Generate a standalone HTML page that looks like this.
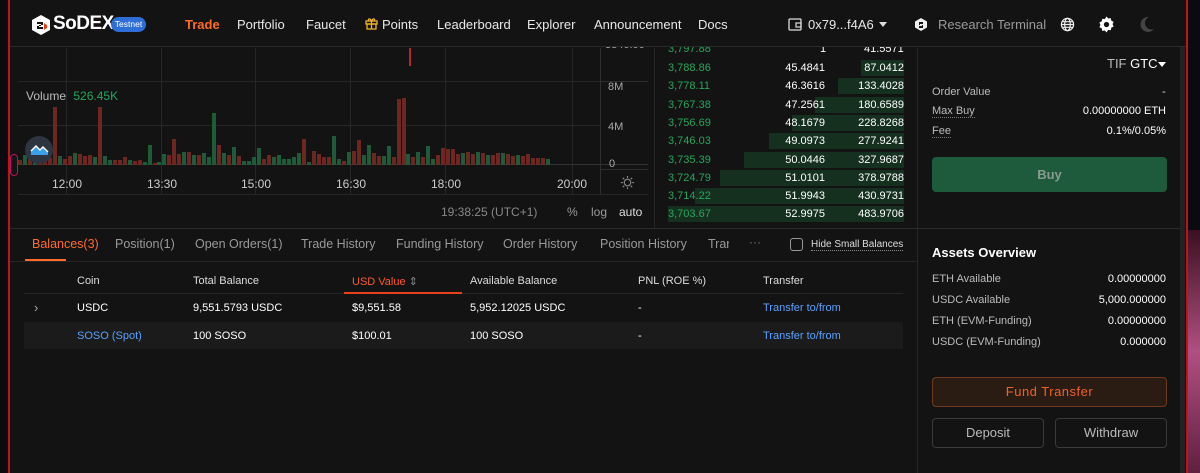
<!DOCTYPE html>
<html><head><meta charset="utf-8">
<style>
*{box-sizing:border-box;margin:0;padding:0}
body{width:1200px;height:473px;overflow:hidden;background:#0a0a10;font-family:"Liberation Sans",sans-serif;color:#ddd;position:relative}
.a{position:absolute;white-space:nowrap}
#win{position:absolute;left:8px;top:0;width:1178px;height:473px;background:#131313;border-left:2px solid #c0141c}
.nav{font-size:13px;color:#e8e8e8;top:17px}
.gl{position:absolute;background:#262626}
.ob{font-size:11px;height:18px;line-height:18px}
.sm{font-size:11px}
.btn{position:absolute;border-radius:4px;text-align:center}
#hdr{position:absolute;left:0;top:0;width:1186px;height:47px;z-index:5;background:linear-gradient(90deg,transparent 10px,#131313 10px)}
</style></head><body>
<div id="win"></div>
<div class="a" style="left:1186px;top:0;width:2px;height:473px;background:#c0141c"></div>
<div class="a" style="left:1188px;top:230px;width:12px;height:243px;background:linear-gradient(#3a1020,#b05080 50%,#602040)"></div>
<div class="a" style="left:1180px;top:18px;width:5px;height:455px;background:#222"></div>

<!-- header -->
<div id="hdr">
<svg class="a" style="left:31px;top:14px" width="20" height="22" viewBox="0 0 20 22"><path d="M10 1L19 6V16L10 21L1 16V6Z" fill="#fff"/><path d="M6 8h6v3H8v2h4v2H6v-3h4v-2H6z" fill="#131313"/><path d="M13 9l3 2v3l-3 2z" fill="#e8401a"/></svg>
<div class="a" style="left:53px;top:13px;font-size:19px;font-weight:bold;color:#fff;letter-spacing:-0.5px">SoDEX</div>
<div class="a" style="left:111px;top:17px;width:35px;height:15px;border-radius:8px;background:#2d6fd6;color:#fff;font-size:8.5px;line-height:15px;text-align:center">Testnet</div>
<div class="a nav" style="left:185px;color:#ff6a2b;font-weight:bold">Trade</div>
<div class="a nav" style="left:237px">Portfolio</div>
<div class="a nav" style="left:306px">Faucet</div>
<svg class="a" style="left:365px;top:17px" width="13" height="13" viewBox="0 0 13 13" fill="none" stroke="#f0b429" stroke-width="1.3"><rect x="1" y="4" width="11" height="3"/><rect x="2" y="7" width="9" height="5"/><path d="M6.5 4v8M6.5 4C5 1 3 1.5 3.5 3.5M6.5 4C8 1 10 1.5 9.5 3.5"/></svg>
<div class="a nav" style="left:382px">Points</div>
<div class="a nav" style="left:437px">Leaderboard</div>
<div class="a nav" style="left:527px">Explorer</div>
<div class="a nav" style="left:594px">Announcement</div>
<div class="a nav" style="left:698px">Docs</div>
<svg class="a" style="left:788px;top:18px" width="14" height="13" viewBox="0 0 14 13"><rect x="1" y="1" width="12" height="11" rx="1" fill="none" stroke="#ddd" stroke-width="1.3"/><rect x="8" y="5" width="5" height="4" fill="none" stroke="#ddd" stroke-width="1.2"/></svg>
<div class="a nav" style="left:808px">0x79...f4A6</div>
<div class="a" style="left:879px;top:22px;border:4px solid transparent;border-top:5px solid #ddd"></div>
<svg class="a" style="left:914px;top:17px" width="14" height="15" viewBox="0 0 14 15"><path d="M7 1L13 4.5V10.5L7 14L1 10.5V4.5Z" fill="#eee"/><path d="M5 5h4v2H6v1h3v3H5V9h3V8H5z" fill="#131313"/></svg>
<div class="a nav" style="left:938px;color:#9a9a9a">Research Terminal</div>
<svg class="a" style="left:1060px;top:17px" width="15" height="15" viewBox="0 0 16 16" fill="none" stroke="#eee" stroke-width="1.3"><circle cx="8" cy="8" r="6.5"/><ellipse cx="8" cy="8" rx="3" ry="6.5"/><path d="M1.5 8h13M2.5 5h11M2.5 11h11"/></svg>
<svg class="a" style="left:1098px;top:16px" width="17" height="17" viewBox="0 0 16 16"><path d="M8 0.5l1.6 1.8 2.4-.3.5 2.4 2.2 1.1-1 2.2 1 2.2-2.2 1.1-.5 2.4-2.4-.3L8 15.5l-1.6-1.8-2.4.3-.5-2.4L1.3 10.5l1-2.2-1-2.2 2.2-1.1.5-2.4 2.4.3z" fill="#fff"/><circle cx="8" cy="8" r="2.5" fill="#131313"/></svg>
<svg class="a" style="left:1139px;top:16px" width="16" height="17" viewBox="0 0 16 17"><path d="M10 1A7.5 7.5 0 1 0 15 13A6 6 0 0 1 10 1Z" fill="#444"/></svg>
<div class="a" style="left:10px;top:46px;width:1176px;height:1px;background:#2a2a2a"></div>
</div>

<!-- chart grid -->
<div class="gl" style="left:66px;top:48px;width:1px;height:146px"></div>
<div class="gl" style="left:161px;top:48px;width:1px;height:146px"></div>
<div class="gl" style="left:255px;top:48px;width:1px;height:146px"></div>
<div class="gl" style="left:350px;top:48px;width:1px;height:146px"></div>
<div class="gl" style="left:445px;top:48px;width:1px;height:146px"></div>
<div class="gl" style="left:572px;top:48px;width:1px;height:146px"></div>
<div class="gl" style="left:18px;top:81px;width:582px;height:1px"></div>
<div class="gl" style="left:18px;top:125px;width:582px;height:1px"></div>
<div class="gl" style="left:18px;top:164px;width:630px;height:1px;background:#333"></div>
<div class="gl" style="left:18px;top:194px;width:630px;height:1px"></div>
<div class="gl" style="left:600px;top:48px;width:1px;height:146px;background:#2e2e2e"></div>
<div class="gl" style="left:600px;top:81px;width:48px;height:1px;background:#2e2e2e"></div>
<div class="gl" style="left:600px;top:169px;width:48px;height:1px;background:#2e2e2e"></div>
<div class="gl" style="left:654px;top:48px;width:1px;height:180px;background:#262626"></div>
<div class="gl" style="left:917px;top:48px;width:1px;height:425px;background:#262626"></div>
<div class="a" style="left:409px;top:48px;width:2px;height:18px;background:#b02828"></div>
<div class="a sm" style="left:26px;top:89px;font-size:12px;color:#bbb">Volume <span style="color:#26a65b;margin-left:4px">526.45K</span></div>
<div id="bars"></div>
<div class="a" style="left:25px;top:136px;width:28px;height:28px;border-radius:50%;background:#2e3440"></div>
<svg class="a" style="left:30px;top:143px" width="19" height="13" viewBox="0 0 19 13"><path d="M1 12V8l5-5 4 4 3-3 5 5v3z" fill="#3aa0e8"/><path d="M1 8l5-5 4 4 3-3 5 5" fill="none" stroke="#fff" stroke-width="1.4"/></svg>
<div class="a" style="left:10px;top:154px;width:8px;height:22px;border:1.5px solid #c01060;border-radius:4px"></div>
<div class="a sm" style="left:52px;top:177px;font-size:12px;color:#ccc">12:00</div>
<div class="a sm" style="left:147px;top:177px;font-size:12px;color:#ccc">13:30</div>
<div class="a sm" style="left:241px;top:177px;font-size:12px;color:#ccc">15:00</div>
<div class="a sm" style="left:336px;top:177px;font-size:12px;color:#ccc">16:30</div>
<div class="a sm" style="left:431px;top:177px;font-size:12px;color:#ccc">18:00</div>
<div class="a sm" style="left:557px;top:177px;font-size:12px;color:#ccc">20:00</div>
<div class="a sm" style="left:605px;top:39px;color:#aaa;font-size:11px">3840.00</div>
<div class="a sm" style="left:608px;top:81px;color:#aaa">8M</div>
<div class="a sm" style="left:608px;top:121px;color:#aaa">4M</div>
<div class="a sm" style="left:609px;top:158px;color:#aaa">0</div>
<svg class="a" style="left:620px;top:175px" width="15" height="15" viewBox="0 0 16 16" fill="none" stroke="#888" stroke-width="1.2"><circle cx="8" cy="8" r="3.5"/><path d="M8 1v2M8 13v2M1 8h2M13 8h2M3 3l1.5 1.5M11.5 11.5L13 13M3 13l1.5-1.5M11.5 4.5L13 3"/></svg>
<div class="a" style="left:441px;top:205px;font-size:12px;color:#888">19:38:25 (UTC+1)</div>
<div class="a" style="left:567px;top:205px;font-size:12px;color:#999">%</div>
<div class="a" style="left:591px;top:205px;font-size:12px;color:#999">log</div>
<div class="a" style="left:619px;top:205px;font-size:12px;color:#ddd">auto</div>

<!-- orderbook -->
<div id="ob"></div>

<!-- order panel -->
<div class="a" style="left:1107px;top:56px;font-size:13px;color:#bbb">TIF <span style="color:#fff">GTC</span></div>
<div class="a" style="left:1158px;top:62px;border:4px solid transparent;border-top:5px solid #fff"></div>
<div class="a sm" style="left:932px;top:86px;color:#bbb">Order Value</div>
<div class="a sm" style="left:1162px;top:86px;color:#ddd">-</div>
<div class="a sm" style="left:932px;top:105px;color:#bbb;border-bottom:1px dotted #777">Max Buy</div>
<div class="a sm" style="right:34px;top:105px;color:#fff">0.00000000 ETH</div>
<div class="a sm" style="left:932px;top:125px;color:#bbb;border-bottom:1px dotted #777">Fee</div>
<div class="a sm" style="right:34px;top:125px;color:#fff">0.1%/0.05%</div>
<div class="btn" style="left:932px;top:157px;width:235px;height:35px;background:#1e5b3c;color:#8a9a90;font-size:13px;font-weight:bold;line-height:35px">Buy</div>

<!-- bottom section -->
<div class="a" style="left:10px;top:228px;width:1170px;height:1px;background:#2a2a2a"></div>
<div class="a" style="left:10px;top:261px;width:907px;height:1px;background:#262626"></div>
<div class="a" style="top:237px;left:32px;font-size:12.5px;color:#ff6a2b">Balances(3)</div>
<div class="a" style="left:25px;top:259px;width:41px;height:2px;background:#ff6a2b"></div>
<div class="a" style="top:237px;left:115px;font-size:12.5px;color:#999">Position(1)</div>
<div class="a" style="top:237px;left:195px;font-size:12.5px;color:#999">Open Orders(1)</div>
<div class="a" style="top:237px;left:301px;font-size:12.5px;color:#999">Trade History</div>
<div class="a" style="top:237px;left:396px;font-size:12.5px;color:#999">Funding History</div>
<div class="a" style="top:237px;left:503px;font-size:12.5px;color:#999">Order History</div>
<div class="a" style="top:237px;left:600px;font-size:12.5px;color:#999">Position History</div>
<div class="a" style="top:237px;left:708px;font-size:12.5px;color:#999;width:21px;overflow:hidden">Transfer</div>
<div class="a" style="top:235px;left:749px;font-size:12px;color:#777">···</div>
<div class="a" style="left:790px;top:238px;width:13px;height:13px;border:1.3px solid #999;border-radius:3px"></div>
<div class="a" style="top:239px;left:811px;font-size:10px;color:#ddd;border-bottom:1px dotted #888">Hide Small Balances</div>
<div class="a" style="left:24px;top:293px;width:879px;height:1px;background:#262626"></div>
<div class="a" style="left:344px;top:292px;width:118px;height:2px;background:#e8401a"></div>
<div class="a sm" style="left:77px;top:275px;color:#ddd">Coin</div>
<div class="a sm" style="left:193px;top:275px;color:#ddd">Total Balance</div>
<div class="a sm" style="left:352px;top:275px;color:#ff5a2a">USD Value <span style="color:#888">⇕</span></div>
<div class="a sm" style="left:470px;top:275px;color:#ddd">Available Balance</div>
<div class="a sm" style="left:638px;top:275px;color:#ddd">PNL (ROE %)</div>
<div class="a sm" style="left:763px;top:275px;color:#ddd">Transfer</div>
<div class="a" style="left:34px;top:300px;color:#aaa;font-size:13px">›</div>
<div class="a sm" style="left:77px;top:302px;color:#fff">USDC</div>
<div class="a sm" style="left:193px;top:302px;color:#fff">9,551.5793 USDC</div>
<div class="a sm" style="left:352px;top:302px;color:#fff">$9,551.58</div>
<div class="a sm" style="left:470px;top:302px;color:#fff">5,952.12025 USDC</div>
<div class="a sm" style="left:638px;top:302px;color:#fff">-</div>
<div class="a sm" style="left:763px;top:302px;color:#5aa0ff">Transfer to/from</div>
<div class="a" style="left:24px;top:322px;width:879px;height:27px;background:#1b1b1b"></div>
<div class="a sm" style="left:77px;top:330px;color:#5aa0ff">SOSO (Spot)</div>
<div class="a sm" style="left:193px;top:330px;color:#fff">100 SOSO</div>
<div class="a sm" style="left:352px;top:330px;color:#fff">$100.01</div>
<div class="a sm" style="left:470px;top:330px;color:#fff">100 SOSO</div>
<div class="a sm" style="left:638px;top:330px;color:#fff">-</div>
<div class="a sm" style="left:763px;top:330px;color:#5aa0ff">Transfer to/from</div>

<!-- assets -->
<div class="a" style="left:932px;top:245px;font-size:13px;font-weight:bold;color:#fff">Assets Overview</div>
<div class="a sm" style="left:932px;top:273px;color:#bbb">ETH Available</div>
<div class="a sm" style="right:34px;top:273px;color:#fff">0.00000000</div>
<div class="a sm" style="left:932px;top:294px;color:#bbb">USDC Available</div>
<div class="a sm" style="right:34px;top:294px;color:#fff">5,000.000000</div>
<div class="a sm" style="left:932px;top:315px;color:#bbb">ETH (EVM-Funding)</div>
<div class="a sm" style="right:34px;top:315px;color:#fff">0.00000000</div>
<div class="a sm" style="left:932px;top:336px;color:#bbb">USDC (EVM-Funding)</div>
<div class="a sm" style="right:34px;top:336px;color:#fff">0.000000</div>
<div class="btn" style="left:932px;top:377px;width:235px;height:30px;background:#2a1b13;border:1px solid #6e3a1e;color:#f0622a;font-size:13px;line-height:28px;letter-spacing:.5px">Fund Transfer</div>
<div class="btn" style="left:932px;top:418px;width:112px;height:30px;border:1px solid #3a3a3a;color:#bbb;font-size:13px;line-height:28px">Deposit</div>
<div class="btn" style="left:1055px;top:418px;width:112px;height:30px;border:1px solid #3a3a3a;color:#bbb;font-size:13px;line-height:28px">Withdraw</div>

<script>
var h=[5,10,9,4,5,7,7,58,9,6,9,12,11,9,10,8,58,9,5,5,5,8,5,4,5,3,20,2,3,11,10,26,11,13,13,10,10,12,8,52,20,12,10,18,9,4,4,8,17,6,10,8,10,6,6,8,12,26,3,14,11,8,8,29,6,4,13,14,25,10,20,12,9,9,19,8,66,67,11,8,13,8,19,6,10,17,16,16,11,12,13,11,13,12,10,10,12,12,11,9,10,9,11,7,7,7,6];
var g=[0,1,0,1,0,0,0,0,1,0,0,1,0,0,0,1,0,1,1,0,0,0,1,0,0,1,1,0,1,1,0,0,0,1,0,1,0,1,1,1,0,1,0,1,0,1,1,1,1,0,0,1,1,1,1,1,1,0,1,0,0,0,0,1,1,0,1,0,0,1,1,0,0,1,1,0,0,0,1,0,1,0,1,1,0,0,0,0,0,1,0,0,1,0,1,0,0,1,0,0,1,0,0,0,0,0,1];
var s="";for(var i=0;i<h.length;i++){var x=18+i*4.98;s+='<div class="a" style="left:'+x.toFixed(1)+'px;top:'+(165-h[i])+'px;width:4px;height:'+h[i]+'px;background:'+(g[i]?'#1f5a3a':'#6e2620')+'"></div>';}
document.getElementById("bars").innerHTML=s;
var p=["3,788.86","3,778.11","3,767.38","3,756.69","3,746.03","3,735.39","3,724.79","3,714.22","3,703.67"];
var q=["45.4841","46.3616","47.2561","48.1679","49.0973","50.0446","51.0101","51.9943","52.9975"];
var t=["87.0412","133.4028","180.6589","228.8268","277.9241","327.9687","378.9788","430.9731","483.9706"];
var l=[861,838,815,792,769,744,720,695,668];
var o='<div class="a ob" style="left:668px;top:40px;color:#26a65b">3,797.88</div><div class="a ob" style="left:820px;top:40px;color:#fff">1</div><div class="a ob" style="left:864px;top:40px;color:#fff">41.5571</div>';
for(var i=0;i<9;i++){var y=59+i*18.3;o+='<div class="a" style="left:'+l[i]+'px;top:'+(y+1)+'px;width:'+(904-l[i])+'px;height:16px;background:#15301f"></div>'+
'<div class="a ob" style="left:668px;top:'+y+'px;color:#26a65b">'+p[i]+'</div><div class="a ob" style="right:375px;top:'+y+'px;color:#fff">'+q[i]+'</div><div class="a ob" style="right:296px;top:'+y+'px;color:#fff">'+t[i]+'</div>';}
document.getElementById("ob").innerHTML=o;
</script>
</body></html>
